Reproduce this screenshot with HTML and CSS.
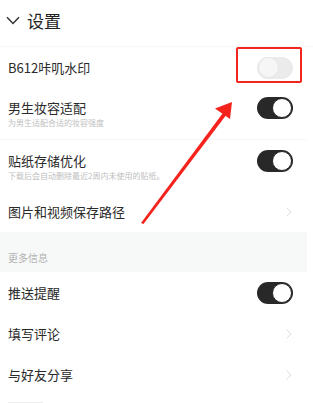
FILE: index.html
```html
<!DOCTYPE html>
<html lang="zh">
<head>
<meta charset="utf-8">
<link rel="stylesheet" href="styles.css">
</head>
<body>
<div class="page">
  <header class="head">
    <svg class="down" width="14" height="9" viewBox="0 0 14 9"><path d="M1 1.2 L7 7.5 L13 1.2" fill="none" stroke="#333" stroke-width="1.5"/></svg>
    <span class="title">设置</span>
  </header>
  <div class="row r1">
    <div class="txt"><div class="main">B612咔叽水印</div></div>
    <span class="tog off"><span class="knob"></span></span>
  </div>
  <div class="row r2">
    <div class="txt"><div class="main">男生妆容适配</div><div class="sub">为男生适配合适的妆容强度</div></div>
    <span class="tog on"><span class="knob"></span></span>
  </div>
  <div class="row r3">
    <div class="txt"><div class="main">贴纸存储优化</div><div class="sub">下载后会自动删除最近2周内未使用的贴纸。</div></div>
    <span class="tog on"><span class="knob"></span></span>
  </div>
  <div class="row r4">
    <div class="txt"><div class="main">图片和视频保存路径</div></div>
    <svg class="chev" width="6" height="10" viewBox="0 0 6 10"><path d="M0.7 0.7 L5 5 L0.7 9.3" fill="none" stroke="#dcdcdc" stroke-width="1"/></svg>
  </div>
  <div class="section">更多信息</div>
  <div class="row r5">
    <div class="txt"><div class="main">推送提醒</div></div>
    <span class="tog on"><span class="knob"></span></span>
  </div>
  <div class="row r5">
    <div class="txt"><div class="main">填写评论</div></div>
    <svg class="chev" width="6" height="10" viewBox="0 0 6 10"><path d="M0.7 0.7 L5 5 L0.7 9.3" fill="none" stroke="#dcdcdc" stroke-width="1"/></svg>
  </div>
  <div class="row r5">
    <div class="txt"><div class="main">与好友分享</div></div>
    <svg class="chev" width="6" height="10" viewBox="0 0 6 10"><path d="M0.7 0.7 L5 5 L0.7 9.3" fill="none" stroke="#dcdcdc" stroke-width="1"/></svg>
  </div>
  <div class="foot"><span class="bar"></span></div>

  <div class="redbox"></div>
  <svg class="arrow" width="313" height="403" viewBox="0 0 313 403">
    <path d="M141 223 L224 111.5 L227 114 L143.5 224 Z" fill="#f5231c"/>
    <path d="M232 102 L215 108.5 L230 119 Z" fill="#f5231c"/>
  </svg>
</div>
</body>
</html>
```
FILE: styles.css
```css
html, body { margin: 0; padding: 0; background: #fff; }
body { font-family: "Noto Sans CJK SC", "Noto Sans", sans-serif; }
.page { position: relative; width: 313px; height: 403px; overflow: hidden; }
.head { height: 47px; display: flex; align-items: center; padding-left: 6px; gap: 7px; box-sizing: border-box; padding-bottom: 5px; border-bottom: 1px solid #f7f7f7; }
.title { font-size: 17px; color: #222; line-height: 1; }
.row { display: flex; align-items: center; padding: 0 14px 0 8px; box-sizing: border-box; width: 307px; }
.r1 { height: 41px; }
.r2, .r3 { align-items: flex-start; }
.r2 { height: 51px; padding-top: 9px; }
.r3 { height: 52px; padding-top: 10px; border-top: 1px solid #f6f6f6; }
.r2 .txt, .r3 .txt { margin-top: 3px; }
.r4 { height: 41px; }
.r5 { height: 41px; }
.txt { flex: 1; min-width: 0; }
.main { font-size: 13px; color: #2a2a2a; line-height: 16px; white-space: nowrap; }
.sub { font-size: 8px; color: #c0c0c0; line-height: 10px; margin-top: 2px; white-space: nowrap; }
.tog { width: 36px; height: 22px; border-radius: 11px; box-sizing: border-box; display: flex; align-items: center; flex: none; }
.tog.on { background: #282828; justify-content: flex-end; }
.tog.on .knob { border-radius: 50%; background: #fff; border: 1px solid #282828; margin-right: 1px; width: 18px; height: 18px; }
.tog.off { background: #ebebeb; justify-content: flex-start; }
.tog.off .knob { width: 19px; height: 19px; border-radius: 50%; background: #f6f6f6; margin-left: 1px; border: 1px solid #e6e6e6; }
.chev { margin-right: 1px; flex: none; }
.section { width: 307px; height: 40px; background: #f7f8f8; box-sizing: border-box; padding: 19px 0 0 8px; font-size: 10px; line-height: 14px; color: #b3b3b3; }
.foot { padding: 7px 0 0 8px; }
.bar { display: block; width: 35px; height: 2px; background: #ededed; }
.redbox { position: absolute; left: 236px; top: 47px; width: 66px; height: 36px; border: 2px solid #f0261f; border-radius: 2px; box-sizing: border-box; }
.arrow { position: absolute; left: 0; top: 0; pointer-events: none; }
```
